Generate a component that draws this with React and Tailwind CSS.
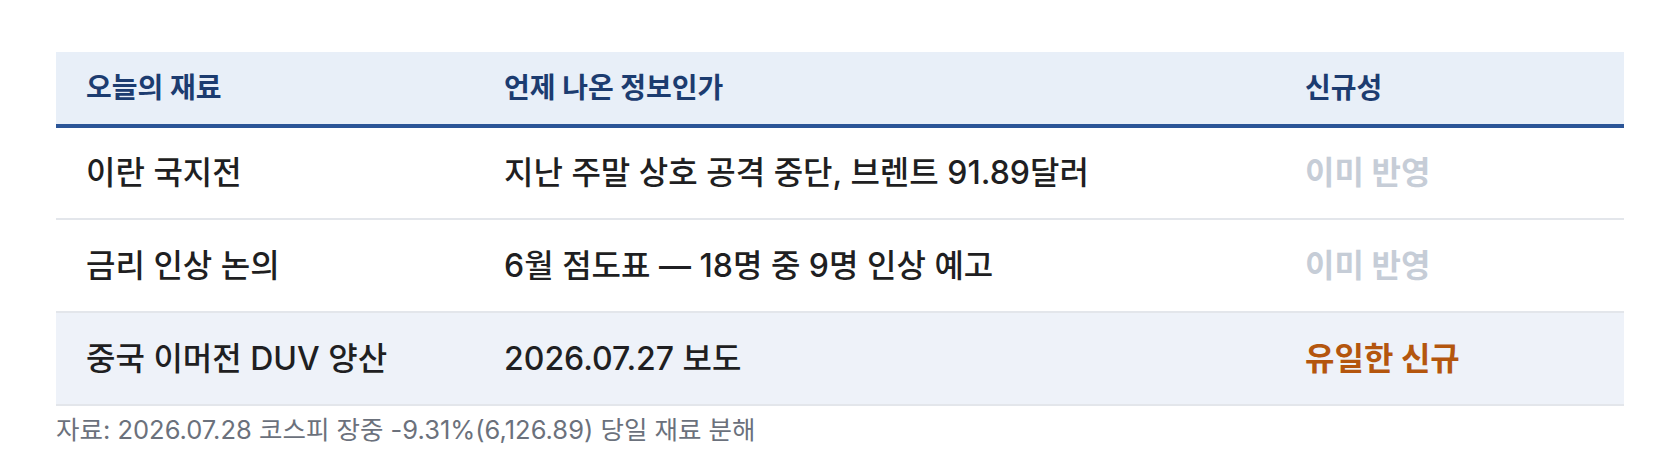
import React from "react";

// Rows of the daily material table
const rows = [
  {
    topic: "이란 국지전",
    when: "지난 주말 상호 공격 중단, 브렌트 91.89달러",
    novelty: "이미 반영",
    isNew: false,
  },
  {
    topic: "금리 인상 논의",
    when: "6월 점도표 — 18명 중 9명 인상 예고",
    novelty: "이미 반영",
    isNew: false,
  },
  {
    topic: "중국 이머전 DUV 양산",
    when: "2026.07.27 보도",
    novelty: "유일한 신규",
    isNew: true,
  },
];

const App = () => {
  return (
    <div
      className="min-h-[456px] bg-white px-[56px] pt-[52px]"
      style={{ fontFamily: '"Inter", "Noto Sans CJK KR", sans-serif' }}
    >
      <table className="w-full table-fixed border-collapse">
        <colgroup>
          <col className="w-[418px]" />
          <col className="w-[801px]" />
          <col />
        </colgroup>
        <thead>
          <tr className="h-[74px] bg-[#e8eff8] border-b-4 border-[#2b5597]">
            <th className="pl-[30px] text-left text-[28px] font-bold text-[#1c3c70]">
              오늘의 재료
            </th>
            <th className="pl-[30px] text-left text-[28px] font-bold text-[#1c3c70]">
              언제 나온 정보인가
            </th>
            <th className="pl-[30px] text-left text-[28px] font-bold text-[#1c3c70]">
              신규성
            </th>
          </tr>
        </thead>
        <tbody>
          {rows.map((row) => (
            <tr
              key={row.topic}
              className={
                row.isNew
                  ? "h-[93px] bg-[#eef2f9] border-b-2 border-[#e3e6eb]"
                  : "h-[93px] bg-white border-b-2 border-[#e3e6eb]"
              }
            >
              <td className="pl-[30px] text-[32px] font-medium text-[#1f1f22]">
                {row.topic}
              </td>
              <td className="pl-[30px] text-[32px] font-medium text-[#1f1f22]">
                {row.when}
              </td>
              <td
                className={
                  row.isNew
                    ? "pl-[30px] text-[32px] font-bold text-[#b4560e]"
                    : "pl-[30px] text-[32px] font-bold text-[#c6cdd7]"
                }
              >
                {row.novelty}
              </td>
            </tr>
          ))}
        </tbody>
      </table>
      <p className="mt-[6px] text-[25.5px] leading-[36px] text-[#6b717c]">
        자료: 2026.07.28 코스피 장중 -9.31%(6,126.89) 당일 재료 분해
      </p>
    </div>
  );
};

export default App;
